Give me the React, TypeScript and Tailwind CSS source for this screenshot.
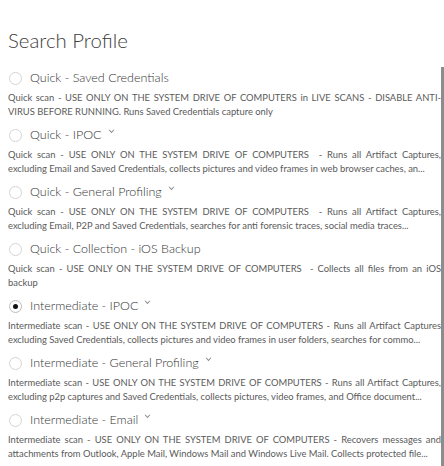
import React from "react";

type Item = { label: string; desc: string; chevron: boolean; checked?: boolean };

const items: Item[] = [
  {
    label: "Quick - Saved Credentials",
    chevron: false,
    desc: "Quick scan - USE ONLY ON THE SYSTEM DRIVE OF COMPUTERS in LIVE SCANS - DISABLE ANTI-VIRUS BEFORE RUNNING. Runs Saved Credentials capture only",
  },
  {
    label: "Quick - IPOC",
    chevron: true,
    desc: "Quick scan - USE ONLY ON THE SYSTEM DRIVE OF COMPUTERS  - Runs all Artifact Captures, excluding Email and Saved Credentials, collects pictures and video frames in web browser caches, an...",
  },
  {
    label: "Quick - General Profiling",
    chevron: true,
    desc: "Quick scan - USE ONLY ON THE SYSTEM DRIVE OF COMPUTERS  - Runs all Artifact Captures, excluding Email, P2P and Saved Credentials, searches for anti forensic traces, social media traces...",
  },
  {
    label: "Quick - Collection - iOS Backup",
    chevron: false,
    desc: "Quick scan - USE ONLY ON THE SYSTEM DRIVE OF COMPUTERS  - Collects all files from an iOS backup",
  },
  {
    label: "Intermediate - IPOC",
    chevron: true,
    checked: true,
    desc: "Intermediate scan - USE ONLY ON THE SYSTEM DRIVE OF COMPUTERS - Runs all Artifact Captures excluding Saved Credentials, collects pictures and video frames in user folders, searches for commo...",
  },
  {
    label: "Intermediate - General Profiling",
    chevron: true,
    desc: "Intermediate scan - USE ONLY ON THE SYSTEM DRIVE OF COMPUTERS - Runs all Artifact Captures, excluding p2p captures and Saved Credentials, collects pictures, video frames, and Office document...",
  },
  {
    label: "Intermediate - Email",
    chevron: true,
    desc: "Intermediate scan - USE ONLY ON THE SYSTEM DRIVE OF COMPUTERS - Recovers messages and attachments from Outlook, Apple Mail, Windows Mail and Windows Live Mail. Collects protected file...",
  },
];

function Chevron() {
  return (
    <svg width="7" height="5" viewBox="0 0 7 5" className="ml-[6px] self-start mt-[5px]">
      <path d="M0.5 0.8 L3.5 4.2 L6.5 0.8 L5.3 0.8 L3.5 2.8 L1.7 0.8 Z" fill="#8a8a8a" />
    </svg>
  );
}

function Radio({ checked }: { checked?: boolean }) {
  return (
    <span
      className={
        checked
          ? "flex h-[13px] w-[13px] items-center justify-center rounded-full border border-[#bdbdbd] bg-white"
          : "flex h-[13px] w-[13px] items-center justify-center rounded-full border border-[#d4d4d4] bg-white"
      }
    >
      {checked ? <span className="h-[5px] w-[5px] rounded-full bg-[#111]" /> : null}
    </span>
  );
}

export default function App() {
  return (
    <div
      className="relative h-[466px] w-[444px] overflow-hidden bg-white text-[#555]"
      style={{ fontFamily: 'Lato, "Open Sans", sans-serif' }}
    >
      <div className="pl-2 pr-[3px] pt-[25px]">
        <h1 className="text-[20.4px] font-light leading-[30px] text-[#3d3d3d]">Search Profile</h1>
        <div className="mt-[12px] flex flex-col gap-[5px]">
          {items.map((it) => (
            <div key={it.label} className="flex flex-col">
              <div className="flex h-[22px] items-center">
                <span className="ml-[1px]">
                  <Radio checked={it.checked} />
                </span>
                <span className="ml-[8px] text-[12.5px] font-light leading-[22px] text-[#333]">{it.label}</span>
                {it.chevron ? <Chevron /> : null}
              </div>
              <p className="mt-[2px] line-clamp-2 h-[28px] whitespace-pre-wrap text-justify text-[9.4px] leading-[14px] text-[#5a5a5a]">
                {it.desc}
              </p>
            </div>
          ))}
        </div>
      </div>
      <div className="absolute right-0 top-[67px] bottom-0 w-[3px] bg-[#8c8c8c]" />
    </div>
  );
}
